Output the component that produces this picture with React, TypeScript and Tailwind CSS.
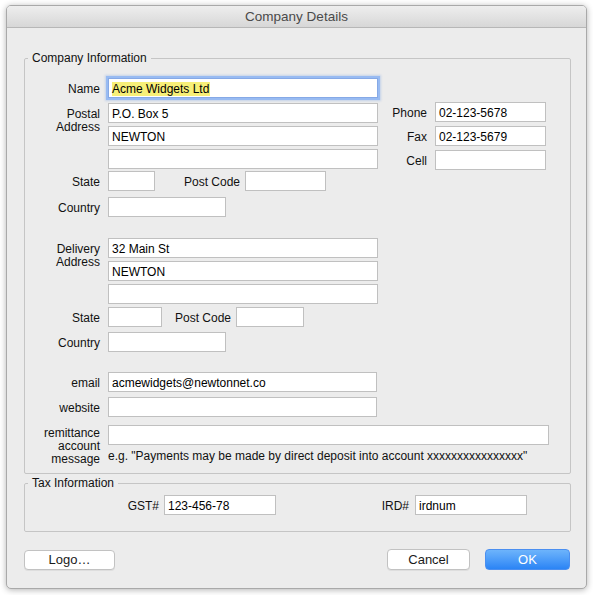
import React from "react";

const Field = ({ w, value, focus }: { w: string; value?: React.ReactNode; focus?: boolean }) => (
  <div
    className={`${w} h-[20px] bg-white border px-[3px] pt-[1px] flex items-center text-[12px] leading-[14px] text-black whitespace-nowrap overflow-hidden ${
      focus
        ? "border-[#86a9e6] shadow-[0_0_0_2px_#98bbf2,0_0_2px_3px_rgba(120,160,230,0.35)]"
        : "border-[#c0c0c0]"
    }`}
  >
    {value}
  </div>
);

const Label = ({ w, children }: { w: string; children: React.ReactNode }) => (
  <div className={`${w} shrink-0 text-right text-[12px] leading-[13px] text-[#111]`}>{children}</div>
);

const App = () => {
  return (
    <div
      className="w-[593px] h-[595px] bg-white pt-[5px] pl-[6px]"
      style={{ fontFamily: '"Liberation Sans", Arial, Helvetica, sans-serif' }}
    >
      <div className="w-[581px] h-[584px] flex flex-col bg-[#ececec] border border-[#a9a9a9] rounded-[5px] overflow-hidden shadow-[0_1px_6px_rgba(0,0,0,0.3)]">
        {/* Title bar */}
        <div className="h-[22px] shrink-0 flex items-center justify-center pt-px border-b border-[#b7b7b7] bg-linear-to-b from-[#eeeeee] to-[#d7d7d7] text-[13.5px] text-[#4a4a4a]">
          Company Details
        </div>

        <div className="pt-[23px] flex flex-col">
          {/* Company Information */}
          <fieldset className="ml-[17px] w-[547px] border border-[#c5c5c5] rounded-[2px] pt-[12px] pb-[7px]">
            <legend className="ml-[3px] px-[4px] text-[12px] leading-[15px] text-[#111]">Company Information</legend>

            <div className="flex">
              <div className="flex flex-col w-[353px]">
                <div className="flex items-center">
                  <Label w="w-[75px] mr-[8px] pt-[2px]">Name</Label>
                  <Field
                    w="w-[270px]"
                    focus
                    value={<span className="bg-[#f7ef78] pr-px">Acme Widgets Ltd</span>}
                  />
                </div>

                <div className="flex items-start mt-[5px]">
                  <Label w="w-[75px] mr-[8px] pt-[5px]">
                    Postal
                    <br />
                    Address
                  </Label>
                  <div className="flex flex-col gap-[3px]">
                    <Field w="w-[270px]" value="P.O. Box 5" />
                    <Field w="w-[270px]" value="NEWTON" />
                    <Field w="w-[270px]" />
                  </div>
                </div>

                <div className="flex items-center mt-[2px]">
                  <Label w="w-[75px] mr-[8px] pt-[2px]">State</Label>
                  <Field w="w-[47px]" />
                  <Label w="w-[85px] mr-[5px] pt-[2px]">Post Code</Label>
                  <Field w="w-[81px]" />
                </div>

                <div className="flex items-center mt-[6px]">
                  <Label w="w-[75px] mr-[8px] pt-[2px]">Country</Label>
                  <Field w="w-[118px]" />
                </div>
              </div>

              <div className="flex flex-col gap-[4px] pt-[24px]">
                <div className="flex items-center">
                  <Label w="w-[49px] mr-[8px] pt-[2px]">Phone</Label>
                  <Field w="w-[111px]" value="02-123-5678" />
                </div>
                <div className="flex items-center">
                  <Label w="w-[49px] mr-[8px] pt-[2px]">Fax</Label>
                  <Field w="w-[111px]" value="02-123-5679" />
                </div>
                <div className="flex items-center">
                  <Label w="w-[49px] mr-[8px] pt-[2px]">Cell</Label>
                  <Field w="w-[111px]" />
                </div>
              </div>
            </div>

            <div className="flex items-start mt-[21px]">
              <Label w="w-[75px] mr-[8px] pt-[5px]">
                Delivery
                <br />
                Address
              </Label>
              <div className="flex flex-col gap-[3px]">
                <Field w="w-[270px]" value="32 Main St" />
                <Field w="w-[270px]" value="NEWTON" />
                <Field w="w-[270px]" />
              </div>
            </div>

            <div className="flex items-center mt-[3px]">
              <Label w="w-[75px] mr-[8px] pt-[2px]">State</Label>
              <Field w="w-[54px]" />
              <Label w="w-[69px] mr-[5px] pt-[2px]">Post Code</Label>
              <Field w="w-[68px]" />
            </div>

            <div className="flex items-center mt-[5px]">
              <Label w="w-[75px] mr-[8px] pt-[2px]">Country</Label>
              <Field w="w-[118px]" />
            </div>

            <div className="flex items-center mt-[20px]">
              <Label w="w-[75px] mr-[8px] pt-[2px]">email</Label>
              <Field w="w-[269px]" value="acmewidgets@newtonnet.co" />
            </div>

            <div className="flex items-center mt-[5px]">
              <Label w="w-[75px] mr-[8px] pt-[2px]">website</Label>
              <Field w="w-[269px]" />
            </div>

            <div className="flex items-start mt-[8px]">
              <Label w="w-[75px] mr-[8px] pt-[2px]">
                remittance
                <br />
                account
                <br />
                message
              </Label>
              <div className="flex flex-col">
                <Field w="w-[441px]" />
                <div className="mt-[4px] pt-px text-[12px] leading-[13px] text-[#111] whitespace-nowrap">
                  e.g. "Payments may be made by direct deposit into account xxxxxxxxxxxxxxxx"
                </div>
              </div>
            </div>
          </fieldset>

          {/* Tax Information */}
          <fieldset className="mt-[2px] ml-[17px] w-[547px] border border-[#c5c5c5] rounded-[2px] pt-[4px] pb-[16px]">
            <legend className="ml-[3px] px-[4px] text-[12px] leading-[15px] text-[#111]">Tax Information</legend>
            <div className="flex items-center">
              <Label w="w-[134px] mr-[5px] pt-[2px]">GST#</Label>
              <Field w="w-[112px]" value="123-456-78" />
              <Label w="w-[133px] mr-[6px] pt-[2px]">IRD#</Label>
              <Field w="w-[112px]" value="irdnum" />
            </div>
          </fieldset>

          {/* Buttons */}
          <div className="flex items-center mt-[17px] pl-[17px] pr-[16px]">
            <button className="w-[91px] h-[20px] bg-white border border-[#c2c2c2] rounded-[4px] text-[13px] leading-[18px] text-[#1a1a1a] shadow-[0_1px_0_rgba(0,0,0,0.06)]">
              Logo…
            </button>
            <div className="flex-1" />
            <button className="w-[83px] h-[21px] bg-white border border-[#c2c2c2] rounded-[4px] text-[13px] leading-[19px] text-[#1a1a1a] shadow-[0_1px_0_rgba(0,0,0,0.06)]">
              Cancel
            </button>
            <button className="ml-[15px] w-[85px] h-[21px] border border-[#4b8ff0] rounded-[4px] bg-linear-to-b from-[#6db4fb] to-[#2a84f5] text-[13px] leading-[19px] text-white">
              OK
            </button>
          </div>
        </div>
      </div>
    </div>
  );
};

export default App;
